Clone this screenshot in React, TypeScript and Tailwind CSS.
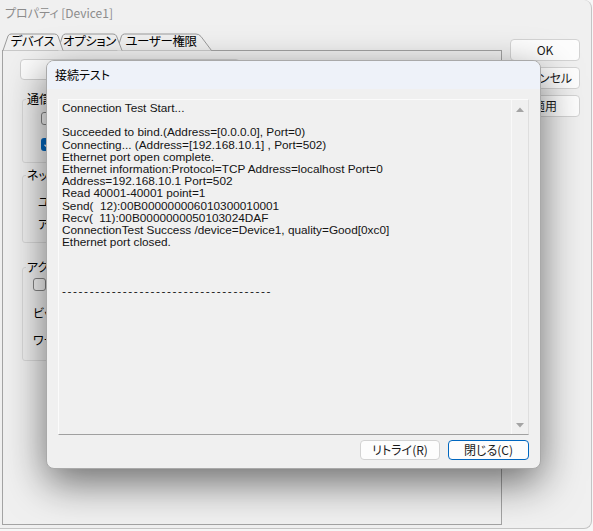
import React from "react";

const LOG = `Connection Test Start...

Succeeded to bind.(Address=[0.0.0.0], Port=0)
Connecting... (Address=[192.168.10.1] , Port=502)
Ethernet port open complete.
Ethernet information:Protocol=TCP Address=localhost Port=0
Address=192.168.10.1 Port=502
Read 40001-40001 point=1
Send(  12):00B000000006010300010001
Recv(  11):00B0000000050103024DAF
ConnectionTest Success /device=Device1, quality=Good[0xc0]
Ethernet port closed.



`;

const DASHES = "--------------------------------------";

function Checkbox({ checked }: { checked?: boolean }) {
  return checked ? (
    <div className="w-[13px] h-[13px] shrink-0 rounded-[3px] bg-[#0067c0] flex items-center justify-center">
      <svg width="9" height="9" viewBox="0 0 9 9">
        <path d="M1.5 4.8 L3.6 6.8 L7.6 2.2" stroke="#fff" strokeWidth="1.3" fill="none" />
      </svg>
    </div>
  ) : (
    <div className="w-[13px] h-[13px] shrink-0 rounded-[3px] border border-[#858585] bg-[#f6f6f6]" />
  );
}

function WinButton({ children, primary }: { children: React.ReactNode; primary?: boolean }) {
  return (
    <div
      className={
        "h-full rounded-[4px] bg-[#fdfdfd] flex items-center justify-center whitespace-nowrap text-[12px] text-[#1a1a1a] " +
        (primary ? "border border-[#0067c0]" : "border border-[#d3d3d3]")
      }
    >
      {children}
    </div>
  );
}

export default function App() {
  return (
    <div className="w-[593px] h-[531px] bg-[#f7f7f7] overflow-hidden relative font-['Noto_Sans_CJK_JP',sans-serif] [font-feature-settings:'palt'] text-black">
      {/* Property window */}
      <div className="w-[592px] h-[529px] bg-[#f0f0f0] rounded-tr-[8px] rounded-br-[8px] border-r border-b border-[#c4c4c4] flex flex-col">
        <div className="h-[26px] shrink-0 pl-[5px] flex items-center text-[12px] text-[#8c8c8c] leading-none">
          プロパティ [Device1]
        </div>
        <div className="flex flex-1 min-h-0">
          {/* left: tabs + panel */}
          <div className="flex flex-col pt-[7px] w-[502px] shrink-0">
            <div className="relative h-[17px] w-[215px] shrink-0">
              <svg className="absolute inset-0" width="215" height="18" viewBox="0 0 215 18">
                <path d="M117 17.5 L121.5 3 Q122.5 1 124.5 1 L196 1 Q199 1 201 3.5 L211.5 17.5" fill="#efefef" stroke="#9a9a9a" strokeWidth="1" />
                <path d="M58 17.5 L62.5 3 Q63.5 1 65.5 1 L113 1 Q115.5 1 116.5 3 L122 17.5" fill="#efefef" stroke="#9a9a9a" strokeWidth="1" />
                <path d="M3 17.5 L8 3 Q9 1 11 1 L54.5 1 Q57 1 58 3 L63 17.5" fill="#f0f0f0" stroke="#9a9a9a" strokeWidth="1" />
              </svg>
              <div className="relative flex h-full items-center text-[12.5px] leading-none whitespace-nowrap tracking-[-0.4px]">
                <div className="ml-[5px] w-[55px] flex justify-center">デバイス</div>
                <div className="ml-[2px] w-[55px] flex justify-center">オプション</div>
                <div className="ml-[3px] w-[82px] flex justify-center">ユーザー権限</div>
              </div>
            </div>
            <div className="ml-[2px] w-[500px] h-[475px] shrink-0 border border-[#a3a3a3] flex flex-col pl-[19px] pt-[8px]">
              <div className="ml-[-2px] w-[220px] h-[21px] shrink-0 rounded-[4px] border border-[#d0d0d0] bg-[#fcfcfc]" />
              <fieldset className="mt-[12px] w-[230px] h-[71px] shrink-0 border border-[#d9d9d9] rounded-[3px] px-[18px]">
                <legend className="ml-[-15px] px-[1px] text-[12px] leading-[14px]">通信設定</legend>
                <div className="pt-[6px] flex flex-col gap-[13px]">
                  <Checkbox />
                  <Checkbox checked />
                </div>
              </fieldset>
              <fieldset className="mt-[5px] w-[230px] h-[75px] shrink-0 border border-[#d9d9d9] rounded-[3px] px-[15px]">
                <legend className="ml-[-12px] px-[1px] text-[12px] leading-[14px]">ネットワーク</legend>
                <div className="pt-[9px] flex flex-col text-[12px] whitespace-nowrap">
                  <div className="h-[22px] flex items-center">ユニットID</div>
                  <div className="h-[22px] flex items-center">アドレス</div>
                </div>
              </fieldset>
              <fieldset className="mt-[17px] w-[230px] h-[101px] shrink-0 border border-[#d9d9d9] rounded-[3px] px-[10px]">
                <legend className="ml-[-7px] px-[1px] text-[12px] leading-[14px]">アクセス</legend>
                <div className="flex flex-col text-[12px] whitespace-nowrap">
                  <div className="h-[20px] flex items-center">
                    <Checkbox />
                  </div>
                  <div className="mt-[9px] h-[20px] flex items-center">ビット</div>
                  <div className="mt-[7px] h-[20px] flex items-center">ワード</div>
                </div>
              </fieldset>
            </div>
          </div>
          {/* right buttons */}
          <div className="ml-[8px] pt-[13px] w-[70px] flex flex-col gap-[6px]">
            <div className="h-[22px]"><WinButton>OK</WinButton></div>
            <div className="h-[22px]"><WinButton>キャンセル</WinButton></div>
            <div className="h-[22px]"><WinButton>適用</WinButton></div>
          </div>
        </div>
      </div>

      {/* Connection test dialog (overlay) */}
      <div className="absolute left-[46px] top-[60px] w-[495px] h-[409px] rounded-[8px] border border-[#a9a9a9] bg-[#f0f0f0] overflow-hidden shadow-[0_14px_40px_rgba(0,0,0,0.55)] flex flex-col">
        <div className="h-[28px] shrink-0 bg-[#eef2f9] pl-[8px] flex items-center text-[12px] leading-none">接続テスト</div>
        <div className="flex flex-col pl-[11px] pr-[11px] pt-[10px]">
          <div className="w-[471px] h-[336px] shrink-0 border-t border-l border-t-[#fbfbfb] border-l-[#fbfbfb] border-b border-b-[#a0a0a0] border-r border-r-[#dedede] flex">
            <div className="flex-1 pl-[3px] pt-[2px] whitespace-pre font-['Liberation_Sans','Noto_Sans_CJK_JP',sans-serif] text-[11.8px] leading-[12.2px] text-[#141414]">
              {LOG}
              <span className="tracking-[1.6px]">{DASHES}</span>
            </div>
            <div className="w-[17px] border-l border-[#f9f9f9] flex flex-col items-center justify-between pt-[7px] pb-[6px]">
              <svg width="8" height="5" viewBox="0 0 8 5">
                <path d="M0 5 L4 0.5 L8 5 Z" fill="#a4a4a4" />
              </svg>
              <svg width="8" height="5" viewBox="0 0 8 5">
                <path d="M0 0 L4 4.5 L8 0 Z" fill="#a4a4a4" />
              </svg>
            </div>
          </div>
          <div className="mt-[5px] h-[20px] flex justify-end gap-[8px]">
            <div className="w-[80px]"><WinButton>リトライ(R)</WinButton></div>
            <div className="w-[81px]"><WinButton primary>閉じる(C)</WinButton></div>
          </div>
        </div>
      </div>
    </div>
  );
}
